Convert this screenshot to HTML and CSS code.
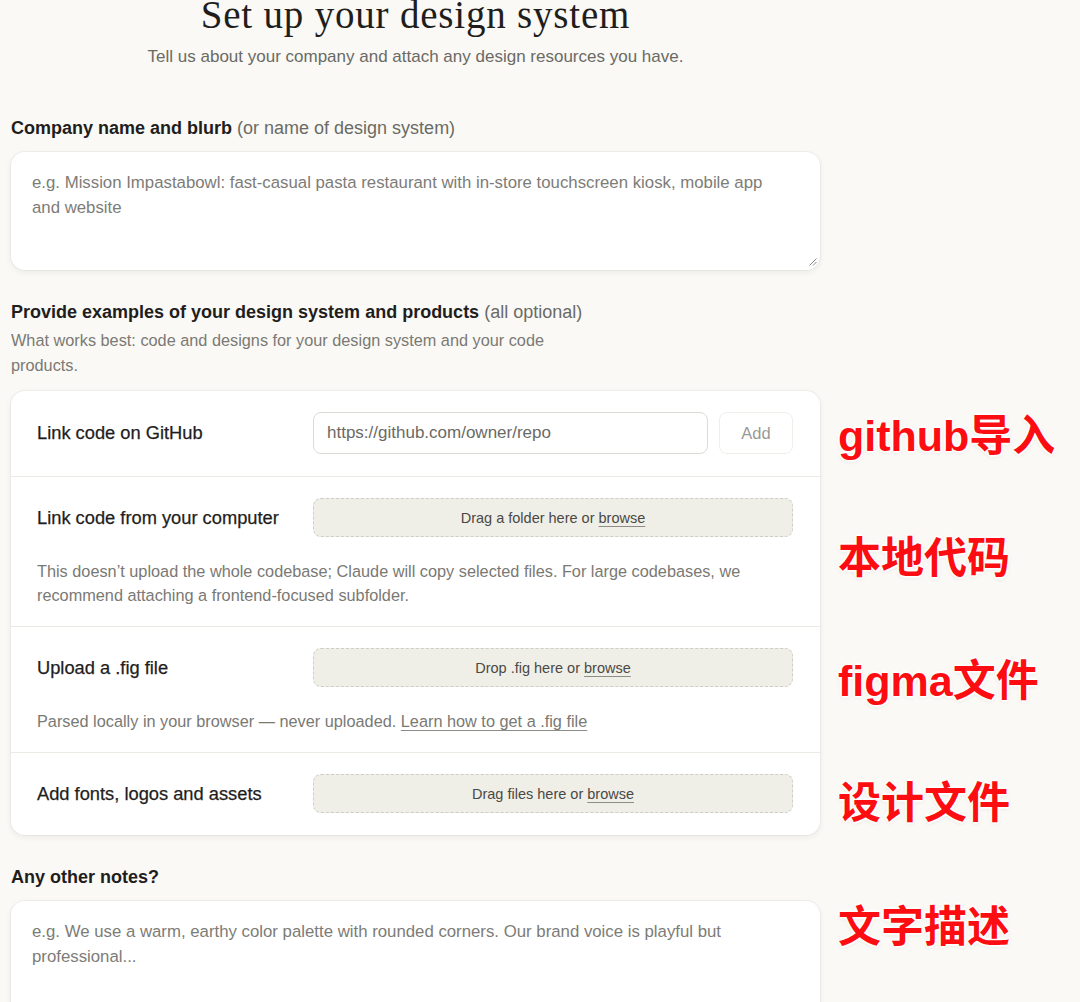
FILE: index.html
```html
<!DOCTYPE html>
<html lang="en">
<head>
<meta charset="utf-8">
<title>Set up your design system</title>
<link rel="stylesheet" href="styles.css">
</head>
<body>
<main class="page">
  <h1 class="title">Set up your design system</h1>
  <p class="subtitle">Tell us about your company and attach any design resources you have.</p>

  <section class="section first">
    <h2 class="label">Company name and blurb <span class="muted">(or name of design system)</span></h2>
    <div class="textarea">
      <p class="placeholder">e.g. Mission Impastabowl: fast-casual pasta restaurant with in-store touchscreen kiosk, mobile app and website</p>
      <svg class="grip" width="9" height="9" viewBox="0 0 9 9"><path d="M8.5 1.5 L1.5 8.5 M8.5 5 L5 8.5" stroke="#8a8984" stroke-width="1" fill="none"/></svg>
    </div>
  </section>

  <section class="section">
    <h2 class="label">Provide examples of your design system and products <span class="muted">(all optional)</span></h2>
    <p class="hint">What works best: code and designs for your design system and your code products.</p>
    <div class="card">
      <div class="row">
        <div class="row-main">
          <div class="row-label">Link code on GitHub</div>
          <div class="row-control">
            <div class="input">https://github.com/owner/repo</div>
            <div class="btn">Add</div>
          </div>
        </div>
      </div>
      <div class="row">
        <div class="row-main">
          <div class="row-label">Link code from your computer</div>
          <div class="row-control">
            <div class="drop">Drag a folder here or <u>browse</u></div>
          </div>
        </div>
        <p class="row-note">This doesn’t upload the whole codebase; Claude will copy selected files. For large codebases, we recommend attaching a frontend-focused subfolder.</p>
      </div>
      <div class="row">
        <div class="row-main">
          <div class="row-label">Upload a .fig file</div>
          <div class="row-control">
            <div class="drop">Drop .fig here or <u>browse</u></div>
          </div>
        </div>
        <p class="row-note">Parsed locally in your browser — never uploaded. <u>Learn how to get a .fig file</u></p>
      </div>
      <div class="row">
        <div class="row-main">
          <div class="row-label">Add fonts, logos and assets</div>
          <div class="row-control">
            <div class="drop">Drag files here or <u>browse</u></div>
          </div>
        </div>
      </div>
    </div>
  </section>

  <section class="section">
    <h2 class="label">Any other notes?</h2>
    <div class="textarea tall">
      <p class="placeholder">e.g. We use a warm, earthy color palette with rounded corners. Our brand voice is playful but professional...</p>
    </div>
  </section>
</main>

<div class="note n1">github导入</div>
<div class="note n2">本地代码</div>
<div class="note n3">figma文件</div>
<div class="note n4">设计文件</div>
<div class="note n5">文字描述</div>
</body>
</html>
```

FILE: styles.css
```css
* { box-sizing: border-box; }
html, body { margin: 0; padding: 0; }
body {
  background: #faf9f5;
  font-family: "Liberation Sans", Arial, sans-serif;
  color: #1f1e1d;
  height: 1002px;
  overflow: hidden;
  position: relative;
}
.page {
  width: 809px;
  margin-left: 11px;
  display: flex;
  flex-direction: column;
}
.title {
  margin: -5px 0 0;
  font-family: "Liberation Serif", "Times New Roman", serif;
  font-weight: 400;
  font-size: 39px;
  line-height: 40px;
  letter-spacing: 0.8px;
  text-align: center;
  color: #1f1e1d;
}
.subtitle {
  margin: 10px 0 0;
  font-size: 17px;
  line-height: 24px;
  text-align: center;
  color: #6b6a65;
}
.section { display: flex; flex-direction: column; margin-top: 30px; }
.section.first { margin-top: 47px; }
.label {
  margin: 0;
  font-size: 18px;
  line-height: 24px;
  font-weight: 700;
  color: #1f1e1d;
}
.muted { font-weight: 400; color: #6b6a65; }
.hint {
  margin: 4px 0 0;
  max-width: 560px;
  font-size: 16.3px;
  line-height: 25px;
  color: #7a7974;
}
.textarea {
  position: relative;
  margin-top: 12px;
  height: 118px;
  background: #fff;
  border-radius: 14px;
  box-shadow: 0 0 0 1px rgba(31, 30, 29, 0.04), 0 2px 6px rgba(31, 30, 29, 0.07);
  padding: 18px 30px 18px 21px;
}
.textarea.tall { height: 160px; }
.placeholder {
  margin: 0;
  font-size: 16.8px;
  line-height: 25px;
  color: #7d7c77;
}
.grip { position: absolute; right: 3px; bottom: 4px; }
.card {
  margin-top: 13px;
  background: #fff;
  border-radius: 14px;
  box-shadow: 0 0 0 1px rgba(31, 30, 29, 0.04), 0 2px 6px rgba(31, 30, 29, 0.07);
  display: flex;
  flex-direction: column;
}
.row {
  padding: 21px 27px 22px 26px;
  border-top: 1px solid #ebeae5;
}
.row:first-child { border-top: 0; }
.row-main { display: flex; align-items: center; }
.row-label {
  width: 276px;
  flex: none;
  font-size: 18.3px;
  line-height: 24px;
  color: #1f1e1d;
  -webkit-text-stroke: 0.25px #1f1e1d;
}
.row-control { flex: 1; display: flex; gap: 11px; }
.input {
  flex: 1;
  height: 42px;
  border: 1px solid #dcdbd5;
  border-radius: 8px;
  padding: 0 13px;
  display: flex;
  align-items: center;
  font-size: 17px;
  color: #6b6a65;
}
.btn {
  width: 74px;
  height: 42px;
  border: 1px solid #efeee9;
  border-radius: 8px;
  display: flex;
  align-items: center;
  justify-content: center;
  font-size: 16.5px;
  color: #9a9994;
}
.drop {
  flex: 1;
  height: 39px;
  border: 1px dashed #cfcdc4;
  border-radius: 8px;
  background: #f0efe7;
  display: flex;
  align-items: center;
  justify-content: center;
  font-size: 14.5px;
  color: #4a4945;
  white-space: pre;
}
.drop u, .row-note u { text-underline-offset: 3px; text-decoration-color: #8d8c87; }
.row-note {
  margin: 22px 0 -3px;
  font-size: 16.3px;
  line-height: 24px;
  color: #7a7974;
}
.note {
  position: absolute;
  left: 838px;
  font-family: "Liberation Sans", "Noto Sans CJK SC", sans-serif;
  font-weight: 700;
  font-size: 43px;
  line-height: 48px;
  color: #fb0d12;
  white-space: nowrap;
  text-shadow:
    0 0 2px #fff, 0 0 2px #fff, 1px 1px 2px #fff, -1px -1px 2px #fff,
    2px 0 2px #fff, -2px 0 2px #fff, 0 2px 2px #fff, 0 -2px 2px #fff,
    0 1px 4px rgba(0, 0, 0, 0.18);
}
.n1 { top: 412px; }
.n2 { top: 534px; }
.n3 { top: 657px; }
.n4 { top: 779px; }
.n5 { top: 903px; }
```
